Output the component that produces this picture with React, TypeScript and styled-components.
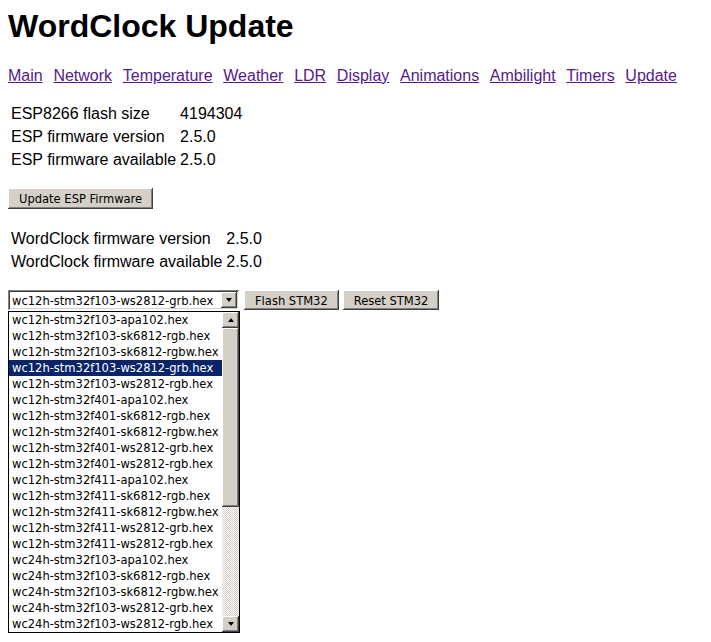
import React from 'react';
import styled, { createGlobalStyle, css } from 'styled-components';

const GlobalStyle = createGlobalStyle`
  body {
    margin: 8px;
    background: #fff;
    color: #000;
    font-family: "Liberation Sans", Arial, sans-serif;
    font-size: 16px;
  }
`;

const links = ['Main', 'Network', 'Temperature', 'Weather', 'LDR', 'Display', 'Animations', 'Ambilight', 'Timers', 'Update'];

const espInfo = [
  ['ESP8266 flash size', '4194304'],
  ['ESP firmware version', '2.5.0'],
  ['ESP firmware available', '2.5.0'],
];

const clockInfo = [
  ['WordClock firmware version', '2.5.0'],
  ['WordClock firmware available', '2.5.0'],
];

const files = [
  'wc12h-stm32f103-apa102.hex',
  'wc12h-stm32f103-sk6812-rgb.hex',
  'wc12h-stm32f103-sk6812-rgbw.hex',
  'wc12h-stm32f103-ws2812-grb.hex',
  'wc12h-stm32f103-ws2812-rgb.hex',
  'wc12h-stm32f401-apa102.hex',
  'wc12h-stm32f401-sk6812-rgb.hex',
  'wc12h-stm32f401-sk6812-rgbw.hex',
  'wc12h-stm32f401-ws2812-grb.hex',
  'wc12h-stm32f401-ws2812-rgb.hex',
  'wc12h-stm32f411-apa102.hex',
  'wc12h-stm32f411-sk6812-rgb.hex',
  'wc12h-stm32f411-sk6812-rgbw.hex',
  'wc12h-stm32f411-ws2812-grb.hex',
  'wc12h-stm32f411-ws2812-rgb.hex',
  'wc24h-stm32f103-apa102.hex',
  'wc24h-stm32f103-sk6812-rgb.hex',
  'wc24h-stm32f103-sk6812-rgbw.hex',
  'wc24h-stm32f103-ws2812-grb.hex',
  'wc24h-stm32f103-ws2812-rgb.hex',
];

const selectedFile = 'wc12h-stm32f103-ws2812-grb.hex';

// classic windows 3d edges
const raised = css`
  background: #d4d0c8;
  box-shadow: inset -1px -1px #404040, inset 1px 1px #fff, inset -2px -2px #808080, inset 2px 2px #d4d0c8;
`;

const controlFont = css`
  font-family: "DejaVu Sans Condensed", "DejaVu Sans", Tahoma, sans-serif;
  font-stretch: condensed;
  font-size: 12.8px;
  color: #000;
`;

const Title = styled.h1`
  margin: 0 0 22px;
  font-size: 32px;
  line-height: 37px;
  font-weight: bold;
`;

const Nav = styled.nav`
  display: flex;
  gap: 10.7px;
  line-height: 18px;
  margin-bottom: 16px;
`;

const NavLink = styled.a`
  color: #551a8b;
  text-decoration: underline;
  cursor: pointer;
`;

const InfoTable = styled.table<{ $mb: number }>`
  border-spacing: 2px;
  margin-bottom: ${(p) => p.$mb}px;

  td {
    padding: 1px;
    line-height: 19px;
    white-space: nowrap;
  }
`;

const Button = styled.button<{ $h?: number }>`
  ${raised};
  ${controlFont};
  border: none;
  height: ${(p) => p.$h ?? 20}px;
  padding: 0 11px;
  margin: 0;
  display: block;
`;

const ButtonBlock = styled.div`
  margin-bottom: 17px;
`;

const FlashRow = styled.div`
  display: flex;
  align-items: flex-start;
  gap: 4px;
`;

const SelectWrap = styled.div`
  display: flex;
  flex-direction: column;
  gap: 1px;
`;

const SelectBox = styled.div`
  ${controlFont};
  width: 231px;
  height: 20px;
  box-sizing: border-box;
  display: flex;
  align-items: center;
  background: #fff;
  box-shadow: inset 1px 1px #808080, inset -1px -1px #fff, inset 2px 2px #404040, inset -2px -2px #d4d0c8;
  padding: 2px 2px 2px 4px;
`;

const SelectValue = styled.span`
  flex: 1;
  white-space: nowrap;
`;

const ArrowButton = styled.span<{ $w?: number; $h?: number }>`
  ${raised};
  width: ${(p) => p.$w ?? 17}px;
  height: ${(p) => p.$h ?? 16}px;
  flex-shrink: 0;
  display: flex;
  align-items: center;
  justify-content: center;
`;

const Arrow = styled.span<{ $up?: boolean }>`
  width: 0;
  height: 0;
  border-left: 3.5px solid transparent;
  border-right: 3.5px solid transparent;
  ${(p) => (p.$up ? 'border-bottom: 4px solid #000;' : 'border-top: 4px solid #000;')}
`;

const ListPopup = styled.div`
  width: 232px;
  box-sizing: border-box;
  border: 1px solid #000;
  background: #fff;
  display: flex;
`;

const Items = styled.ul`
  ${controlFont};
  flex: 1;
  list-style: none;
  margin: 0;
  padding: 0;
`;

const Item = styled.li<{ $selected?: boolean }>`
  height: 16px;
  line-height: 16px;
  padding: 0 3px 0 3px;
  white-space: nowrap;
  background: ${(p) => (p.$selected ? '#0a246a' : 'transparent')};
  color: ${(p) => (p.$selected ? '#fff' : '#000')};
`;

const ScrollBar = styled.div`
  width: 17px;
  display: flex;
  flex-direction: column;
`;

const Thumb = styled.div`
  ${raised};
  height: 179px;
`;

const Track = styled.div`
  flex: 1;
  background: repeating-conic-gradient(#d4d0c8 0 25%, #fff 0 50%) 0 0 / 2px 2px;
`;

export default function App() {
  return (
    <>
      <GlobalStyle />
      <Title>WordClock Update</Title>
      <Nav>
        {links.map((l) => (
          <NavLink key={l} href="#">
            {l}
          </NavLink>
        ))}
      </Nav>
      <InfoTable $mb={16}>
        <tbody>
          {espInfo.map(([k, v]) => (
            <tr key={k}>
              <td>{k}</td>
              <td>{v}</td>
            </tr>
          ))}
        </tbody>
      </InfoTable>
      <ButtonBlock>
        <Button $h={21}>Update ESP Firmware</Button>
      </ButtonBlock>
      <InfoTable $mb={16}>
        <tbody>
          {clockInfo.map(([k, v]) => (
            <tr key={k}>
              <td>{k}</td>
              <td>{v}</td>
            </tr>
          ))}
        </tbody>
      </InfoTable>
      <FlashRow>
        <SelectWrap>
          <SelectBox>
            <SelectValue>{selectedFile}</SelectValue>
            <ArrowButton $w={16} $h={16}>
              <Arrow />
            </ArrowButton>
          </SelectBox>
          <ListPopup>
            <Items>
              {files.map((f) => (
                <Item key={f} $selected={f === selectedFile}>
                  {f}
                </Item>
              ))}
            </Items>
            <ScrollBar>
              <ArrowButton>
                <Arrow $up />
              </ArrowButton>
              <Thumb />
              <Track />
              <ArrowButton>
                <Arrow />
              </ArrowButton>
            </ScrollBar>
          </ListPopup>
        </SelectWrap>
        <Button>Flash STM32</Button>
        <Button>Reset STM32</Button>
      </FlashRow>
    </>
  );
}
